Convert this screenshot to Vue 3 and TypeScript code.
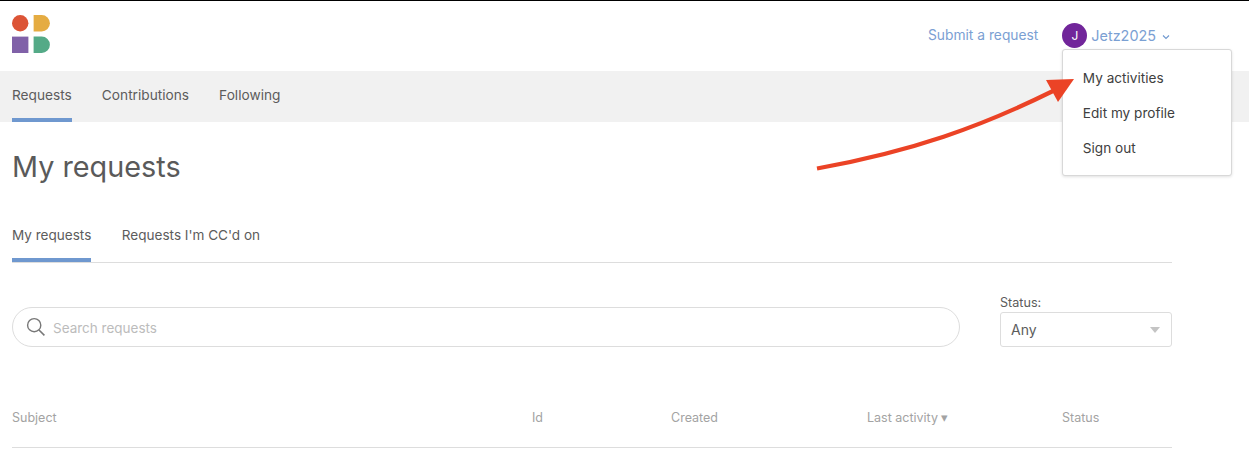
<template>
  <div class="page">
    <header class="header">
      <svg class="logo" width="38" height="38" viewBox="0 0 38 38" aria-label="Logo">
        <circle cx="8.2" cy="8.2" r="8.2" fill="#dc5436" />
        <path d="M21.6 0h8.1a8.2 8.2 0 0 1 0 16.4h-8.1z" fill="#e5ac42" />
        <rect x="0" y="21.6" width="16.4" height="16.4" fill="#8061a8" />
        <path d="M21.6 21.6h8.1a8.2 8.2 0 0 1 0 16.4h-8.1z" fill="#54aa87" />
      </svg>
      <div class="header-actions">
        <a class="link submit">Submit a request</a>
        <div class="user">
          <span class="avatar">J</span>
          <span class="link name">Jetz2025</span>
          <svg class="chevron" width="8" height="6" viewBox="0 0 8 6">
            <path d="M1 1.5l3 3 3-3" fill="none" stroke="#6f98cf" stroke-width="1.1" />
          </svg>
          <ul class="menu">
            <li v-for="item in menuItems" :key="item">{{ item }}</li>
          </ul>
        </div>
      </div>
    </header>

    <nav class="nav">
      <a
        v-for="tab in navTabs"
        :key="tab"
        class="tab"
        :class="{ active: tab === 'Requests' }"
      >{{ tab }}</a>
    </nav>

    <main class="content">
      <h1 class="title">My requests</h1>

      <div class="subtabs">
        <a
          v-for="tab in subTabs"
          :key="tab"
          class="tab"
          :class="{ active: tab === 'My requests' }"
        >{{ tab }}</a>
      </div>

      <div class="filters">
        <div class="search">
          <svg width="20" height="20" viewBox="0 0 20 20">
            <circle cx="8.2" cy="8.2" r="6.6" fill="none" stroke="#777" stroke-width="1.4" />
            <path d="M13 13l5.4 5.4" fill="none" stroke="#777" stroke-width="1.6" />
          </svg>
          <span class="placeholder">Search requests</span>
        </div>
        <div class="status">
          <label>Status:</label>
          <div class="select">
            <span>Any</span>
            <i class="caret"></i>
          </div>
        </div>
      </div>

      <div class="table-head">
        <span v-for="col in columns" :key="col">{{ col }}</span>
      </div>
    </main>

    <svg class="arrow" width="270" height="110" viewBox="0 0 270 110">
      <path d="M7 98.500C103 81 170 57 243 21" fill="none" stroke="#eb4326" stroke-width="4.200" />
      <polygon points="236,10 264,9 248,32" fill="#eb4326" />
    </svg>
  </div>
</template>

<script setup lang="ts">
const menuItems: string[] = ['My activities', 'Edit my profile', 'Sign out']
const navTabs: string[] = ['Requests', 'Contributions', 'Following']
const subTabs: string[] = ['My requests', "Requests I'm CC'd on"]
const columns: string[] = ['Subject', 'Id', 'Created', 'Last activity ▾', 'Status']
</script>

<style>
html,
body {
  margin: 0;
  background: #fff;
}
</style>

<style scoped>
.page {
  position: relative;
  width: 1249px;
  height: 456px;
  overflow: hidden;
  font-family: Inter, "Liberation Sans", sans-serif;
  font-size: 13.7px;
  color: #5c5c5c;
  border-top: 1px solid #000;
  box-sizing: border-box;
}

.header {
  display: flex;
  justify-content: space-between;
  height: 70px;
  padding: 14px 0 0 12px;
  box-sizing: border-box;
}

.header-actions {
  display: flex;
  align-items: flex-start;
  gap: 24px;
  padding: 8px 79px 0 0;
}

.link {
  color: #7ba0d3;
  line-height: 24px;
}

.submit {
  font-size: 13.8px;
}

.name {
  font-size: 14.4px;
}

.user {
  position: relative;
  display: flex;
  align-items: center;
  gap: 4px;
  height: 25px;
}

.avatar {
  display: flex;
  align-items: center;
  justify-content: center;
  width: 25px;
  height: 25px;
  border-radius: 50%;
  background: #71259a;
  color: #fff;
  font-size: 12px;
}

.chevron {
  margin: 2px 0 0 2px;
}

.menu {
  position: absolute;
  top: 26px;
  left: 0;
  z-index: 1;
  width: 170px;
  height: 127px;
  margin: 0;
  padding: 11px 0;
  box-sizing: border-box;
  list-style: none;
  background: #fff;
  border: 1px solid #d8d8d8;
  border-radius: 3px;
  box-shadow: 0 1px 3px rgba(0, 0, 0, 0.12);
  color: #404040;
}

.menu li {
  height: 35px;
  padding-left: 19.5px;
  line-height: 35px;
  white-space: nowrap;
  font-size: 13.6px;
}

.nav {
  display: flex;
  gap: 30px;
  height: 51px;
  padding-left: 12px;
  background: #f1f1f1;
}

.tab {
  display: block;
  box-sizing: border-box;
  height: 100%;
  line-height: 48px;
}

.tab.active {
  border-bottom: 4px solid #6f98cf;
}

.content {
  width: 1160px;
  padding-left: 12px;
}

.title {
  margin: 26px 0 0;
  font-size: 28.8px;
  font-weight: 400;
  line-height: 38px;
  color: #5a5a5a;
}

.subtabs {
  display: flex;
  gap: 30.5px;
  height: 51px;
  margin-top: 25px;
  border-bottom: 1px solid #ddd;
  font-size: 13.55px;
}

.filters {
  display: flex;
  justify-content: space-between;
  align-items: flex-end;
  margin-top: 31px;
}

.search {
  display: flex;
  align-items: center;
  gap: 7px;
  width: 948px;
  height: 40px;
  padding-left: 13px;
  box-sizing: border-box;
  border: 1px solid #ddd;
  border-radius: 20px;
  color: #bcbcbc;
  font-size: 13.5px;
}

.placeholder {
  padding-top: 1px;
}

.status label {
  display: block;
  font-size: 12.6px;
  line-height: 18px;
}

.select {
  display: flex;
  align-items: center;
  justify-content: space-between;
  width: 172px;
  height: 35px;
  padding: 0 11px 0 10px;
  box-sizing: border-box;
  border: 1px solid #ddd;
  border-radius: 3px;
  font-size: 14px;
}

.caret {
  width: 0;
  height: 0;
  border-left: 5px solid transparent;
  border-right: 5px solid transparent;
  border-top: 6px solid #c4c4c4;
}

.table-head {
  display: grid;
  grid-template-columns: 520px 139px 196px 195px 1fr;
  height: 61px;
  margin-top: 40px;
  padding-top: 23px;
  box-sizing: border-box;
  border-bottom: 1px solid #ddd;
  font-size: 12.5px;
  color: #a3a3a3;
}

.arrow {
  position: absolute;
  top: 69px;
  left: 810px;
  z-index: 2;
}
</style>
